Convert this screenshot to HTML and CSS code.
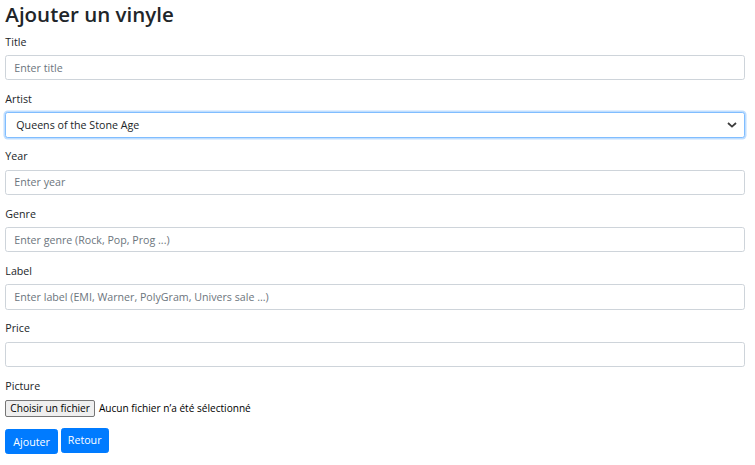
FILE: index.html
```html
<!DOCTYPE html>
<html lang="fr">
<head>
<meta charset="utf-8">
<title>Ajouter un vinyle</title>
<link rel="stylesheet" href="styles.css">
</head>
<body>
<main class="page">
  <h1 class="title">Ajouter un vinyle</h1>
  <form class="form">
    <div class="group">
      <label class="label">Title</label>
      <input class="control" type="text" placeholder="Enter title">
    </div>
    <div class="group">
      <label class="label">Artist</label>
      <div class="select-wrap">
        <select class="control select">
          <option>Queens of the Stone Age</option>
        </select>
        <svg class="chevron" width="10" height="6" viewBox="0 0 10 6"><path d="M1 1l4 3.6L9 1" fill="none" stroke="#3c3c3c" stroke-width="1.8"/></svg>
      </div>
    </div>
    <div class="group">
      <label class="label">Year</label>
      <input class="control" type="text" placeholder="Enter year">
    </div>
    <div class="group">
      <label class="label">Genre</label>
      <input class="control" type="text" placeholder="Enter genre (Rock, Pop, Prog ...)">
    </div>
    <div class="group">
      <label class="label">Label</label>
      <input class="control" type="text" placeholder="Enter label (EMI, Warner, PolyGram, Univers sale ...)">
    </div>
    <div class="group">
      <label class="label">Price</label>
      <input class="control" type="text">
    </div>
    <div class="group">
      <label class="label">Picture</label>
      <div class="file">
        <span class="file-btn">Choisir un fichier</span>
        <span class="file-name">Aucun fichier n’a été sélectionné</span>
      </div>
    </div>
    <div class="actions">
      <button class="btn" type="button">Ajouter</button>
      <a class="btn btn-link">Retour</a>
    </div>
  </form>
</main>
</body>
</html>
```

FILE: styles.css
```css
* { box-sizing: border-box; }
html, body { margin: 0; padding: 0; background: #fff; }
body {
  font-family: "Open Sans", "Noto Sans", sans-serif;
  font-size: 10.67px;
  line-height: 16px;
  color: #212529;
}
.page { padding: 0 10px 0 5.33px; }
.title {
  margin: 0 0 5.7px;
  font-size: 20.5px;
  line-height: 28px;
  font-weight: 600;
  color: #212529;
}
.form { display: flex; flex-direction: column; }
.group { display: flex; flex-direction: column; margin-bottom: 10.67px; }
.label { display: block; margin-bottom: 5.33px; }
.control {
  display: block;
  width: 100%;
  height: 25.33px;
  padding: 4px 8px;
  font-family: inherit;
  font-size: 10.67px;
  line-height: 16px;
  color: #495057;
  background: #fff;
  border: 1px solid #ced4da;
  border-radius: 2.67px;
  outline: none;
}
.control::placeholder { color: #6c757d; opacity: 1; }
.select-wrap { position: relative; }
.select {
  -webkit-appearance: none;
  appearance: none;
  padding-left: 10px;
  color: #212529;
  border-color: #80bdff;
  box-shadow: 0 0 0 1.5px rgba(0, 123, 255, 0.25);
}
.chevron { position: absolute; right: 8px; top: 10px; }
.file { display: flex; align-items: center; gap: 4px; height: 19px; font-size: 10.1px; }
.file-btn {
  display: inline-block;
  height: 17px;
  padding: 0 4px;
  line-height: 15px;
  background: #efefef;
  border: 1px solid #767676;
  border-radius: 2px;
  color: #000;
}
.file-name { color: #000; }
.actions { display: flex; align-items: flex-start; gap: 3px; }
.btn {
  display: inline-block;
  height: 25.33px;
  padding: 4px 7px;
  font-family: inherit;
  font-size: 10.67px;
  line-height: 16px;
  color: #fff;
  background: #007bff;
  border: 1px solid #007bff;
  border-radius: 2.67px;
  cursor: pointer;
  text-decoration: none;
}
.btn-link { margin-top: -1px; padding: 3px 6px 4px; }
```
